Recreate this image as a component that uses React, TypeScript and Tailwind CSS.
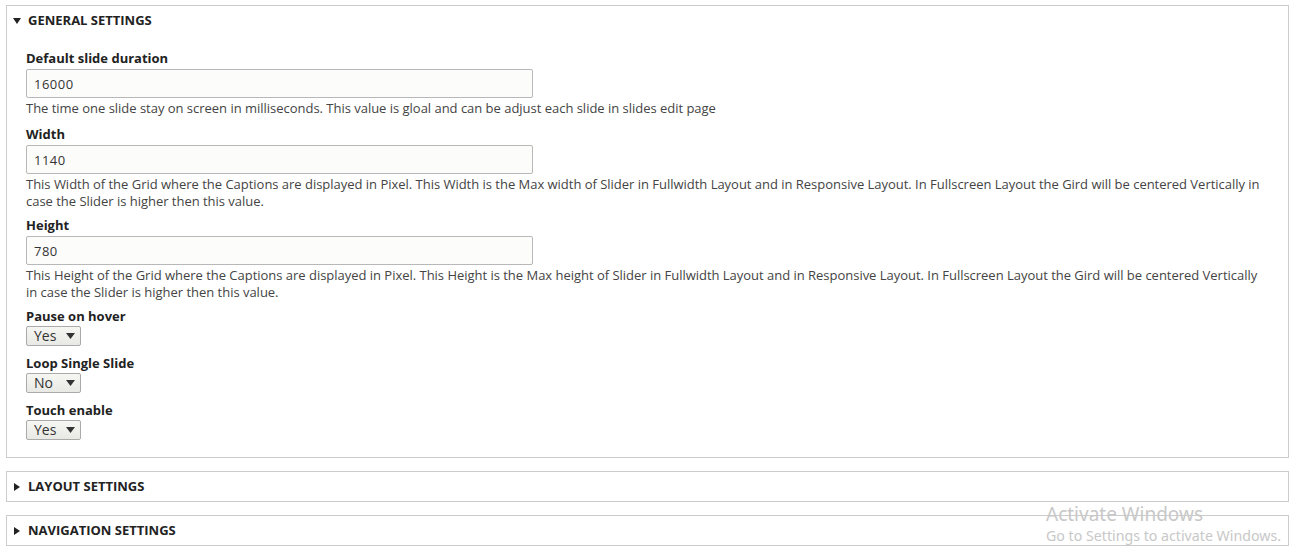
import React from 'react';

const Caret: React.FC<{ open?: boolean }> = ({ open }) => (
    <svg width="8" height="8" viewBox="0 0 8 8" className="shrink-0">
        {open ? <polygon points="0,1 8,1 4,7" fill="#222" /> : <polygon points="1,0 7,4 1,8" fill="#222" />}
    </svg>
);

const TextField: React.FC<{ label: string; value: string; desc: string; gap: string }> = ({ label, value, desc, gap }) => (
    <div className={gap}>
        <label className="block font-bold text-[13px] leading-[18px] text-[#222]">{label}</label>
        <input
            type="text"
            defaultValue={value}
            className="mt-[2px] block w-[507px] h-[29px] px-[7px] bg-[#fcfcfa] border border-[#b8b8b8] rounded-[2px] text-[13px] tracking-[0.5px] text-[#333] outline-none"
        />
        <div className="mt-[2px] text-[13px] leading-[17px] tracking-[-0.02px] text-[#444]">{desc}</div>
    </div>
);

const SelectField: React.FC<{ label: string; value: string; gap?: string }> = ({ label, value, gap = 'mb-[8px]' }) => (
    <div className={gap}>
        <label className="block font-bold text-[13px] leading-[18px] text-[#222]">{label}</label>
        <div className="mt-[1px] flex items-center justify-between w-[55px] h-[20px] pl-[7px] pr-[5px] border border-[#aaa] rounded-[2px] bg-gradient-to-b from-[#f6f6f3] to-[#e8e8e4] text-[14px] leading-[18px] text-[#333]">
            <span>{value}</span>
            <svg width="9" height="6" viewBox="0 0 9 6"><polygon points="0,0 9,0 4.5,6" fill="#333" /></svg>
        </div>
    </div>
);

const Collapsed: React.FC<{ title: string }> = ({ title }) => (
    <div className="mt-[13px] h-[31px] border border-[#ccc] flex items-center gap-[7px] pl-[6px]">
        <Caret />
        <span className="font-bold text-[13px] text-[#222] uppercase">{title}</span>
    </div>
);

export default function App() {
    return (
        <div className="relative w-[1297px] h-[555px] bg-white px-[6px] pt-[5px] overflow-hidden" style={{ fontFamily: '"Open Sans", "DejaVu Sans", sans-serif' }}>
            <div className="w-[1283px] border border-[#ccc] pb-[17px]">
                <div className="flex items-center gap-[7px] pl-[6px] h-[29px]">
                    <Caret open />
                    <span className="font-bold text-[13px] text-[#222] uppercase">General settings</span>
                </div>
                <div className="pl-[19px] pr-[20px] pt-[14px]">
                    <TextField
                        gap="mb-[8px]"
                        label="Default slide duration"
                        value="16000"
                        desc="The time one slide stay on screen in milliseconds. This value is gloal and can be adjust each slide in slides edit page"
                    />
                    <TextField
                        gap="mb-[6px]"
                        label="Width"
                        value="1140"
                        desc="This Width of the Grid where the Captions are displayed in Pixel. This Width is the Max width of Slider in Fullwidth Layout and in Responsive Layout. In Fullscreen Layout the Gird will be centered Vertically in case the Slider is higher then this value."
                    />
                    <TextField
                        gap="mb-[6px]"
                        label="Height"
                        value="780"
                        desc="This Height of the Grid where the Captions are displayed in Pixel. This Height is the Max height of Slider in Fullwidth Layout and in Responsive Layout. In Fullscreen Layout the Gird will be centered Vertically in case the Slider is higher then this value."
                    />
                    <SelectField label="Pause on hover" value="Yes" />
                    <SelectField label="Loop Single Slide" value="No" />
                    <SelectField label="Touch enable" value="Yes" gap="mb-0" />
                </div>
            </div>
            <div className="w-[1283px]">
                <Collapsed title="Layout settings" />
                <Collapsed title="Navigation settings" />
            </div>
            <div className="absolute left-[1046px] top-[502px] text-[#c8c8c8] pointer-events-none" style={{ fontFamily: '"Noto Sans", "Open Sans", sans-serif' }}>
                <div className="text-[19px] leading-[24px]">Activate Windows</div>
                <div className="text-[14.2px] leading-[20px]">Go to Settings to activate Windows.</div>
            </div>
        </div>
    );
}
